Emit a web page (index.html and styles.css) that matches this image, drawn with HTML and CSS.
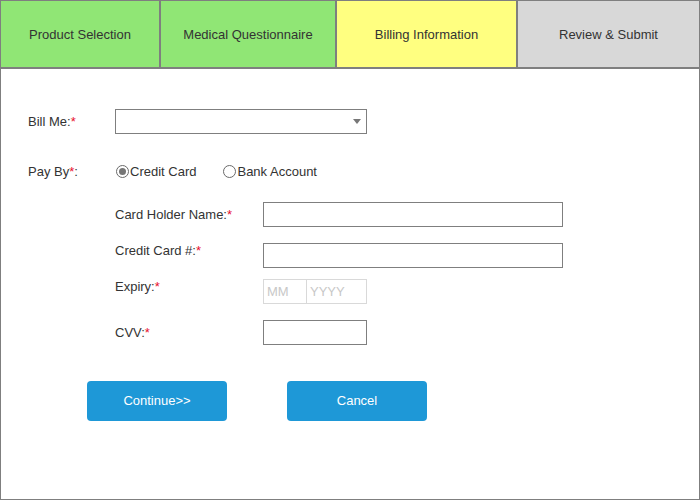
FILE: index.html
```html
<!DOCTYPE html>
<html>
<head>
<meta charset="utf-8">
<link rel="stylesheet" href="styles.css">
</head>
<body>
<div class="page">
  <div class="tabs">
    <div class="tab tab-done t1">Product Selection</div>
    <div class="tab tab-done t2">Medical Questionnaire</div>
    <div class="tab tab-active t3">Billing Information</div>
    <div class="tab tab-todo t4">Review &amp; Submit</div>
  </div>
  <div class="form">
    <div class="row row-bill">
      <div class="label lbl-main">Bill Me:<span class="req">*</span></div>
      <div class="select"><span class="arrow"></span></div>
    </div>
    <div class="row row-pay">
      <div class="label lbl-main">Pay By<span class="req">*</span>:</div>
      <div class="radio-group">
        <span class="radio checked"></span><span class="radio-text">Credit Card</span>
        <span class="radio radio2"></span><span class="radio-text">Bank Account</span>
      </div>
    </div>
    <div class="card">
      <div class="crow crow-center r-holder">
        <div class="label lbl-card">Card Holder Name:<span class="req">*</span></div>
        <div class="input wide"></div>
      </div>
      <div class="crow crow-top r-number">
        <div class="label lbl-card">Credit Card #:<span class="req">*</span></div>
        <div class="input wide"></div>
      </div>
      <div class="crow crow-top r-expiry">
        <div class="label lbl-card">Expiry:<span class="req">*</span></div>
        <div class="expiry">
          <div class="ph mm">MM</div>
          <div class="ph yy">YYYY</div>
        </div>
      </div>
      <div class="crow crow-center r-cvv">
        <div class="label lbl-card">CVV:<span class="req">*</span></div>
        <div class="input short"></div>
      </div>
    </div>
    <div class="buttons">
      <div class="btn">Continue&gt;&gt;</div>
      <div class="btn">Cancel</div>
    </div>
  </div>
</div>
</body>
</html>
```

FILE: styles.css
```css
* { box-sizing: border-box; }
html, body { margin: 0; padding: 0; background: #fff; }
body { font-family: "Liberation Sans", Arial, sans-serif; font-size: 13px; color: #333; }

.page {
  width: 700px;
  height: 500px;
  border: 1px solid #7f7f7f;
}

.tabs {
  display: flex;
  height: 68px;
  border-bottom: 2px solid #7f7f7f;
}
.tab {
  display: flex;
  align-items: center;
  justify-content: center;
  border-right: 2px solid #7f7f7f;
  color: #333;
}
.t1 { width: 160px; }
.t2 { width: 176px; }
.t3 { width: 181px; }
.t4 { width: 181px; border-right: none; }
.tab-done { background: #90e675; }
.tab-active { background: #ffff80; }
.tab-todo { background: #d8d8d8; }

.form { padding: 40px 0 0 27px; }

.row { display: flex; align-items: center; }
.label { line-height: 16px; white-space: nowrap; }
.lbl-main { width: 87px; }
.req { color: #e8112d; }

.select {
  width: 252px;
  height: 25px;
  border: 1px solid #7f7f7f;
  display: flex;
  align-items: center;
  justify-content: flex-end;
  padding-right: 5px;
}
.arrow {
  width: 0;
  height: 0;
  border-left: 4px solid transparent;
  border-right: 4px solid transparent;
  border-top: 5px solid #777;
}

.row-pay { margin-top: 25px; height: 25px; }
.radio-group { display: flex; align-items: center; }
.radio {
  width: 13px;
  height: 13px;
  border: 1px solid #6a6a6a;
  border-radius: 50%;
  display: flex;
  align-items: center;
  justify-content: center;
  margin-right: 1px;
  margin-left: 1px;
}
.radio.checked::after {
  content: "";
  width: 7px;
  height: 7px;
  border-radius: 50%;
  background: #767676;
}
.radio2 { margin-left: 27px; margin-right: 1px; }
.radio-text { line-height: 16px; }

.card { margin-left: 87px; margin-top: 18px; }
.crow { display: flex; }
.crow-center { align-items: center; }
.crow-top { align-items: flex-start; }
.lbl-card { width: 148px; }
.r-number { margin-top: 16px; }
.r-expiry { margin-top: 11px; }
.r-cvv { margin-top: 16px; }

.input {
  height: 25px;
  border: 1px solid #7f7f7f;
}
.wide { width: 300px; }
.short { width: 104px; }

.expiry { display: flex; }
.ph {
  height: 25px;
  border: 1px solid #d9d9d9;
  color: #c8c8c8;
  display: flex;
  align-items: center;
  padding-left: 3px;
}
.mm { width: 44px; }
.yy { width: 60px; border-left: none; padding-left: 3px; }

.buttons { display: flex; margin: 36px 0 0 59px; gap: 60px; }
.btn {
  width: 140px;
  height: 40px;
  padding-bottom: 2px;
  background: #1e98d7;
  color: #fff;
  border-radius: 4px;
  display: flex;
  align-items: center;
  justify-content: center;
}
```
